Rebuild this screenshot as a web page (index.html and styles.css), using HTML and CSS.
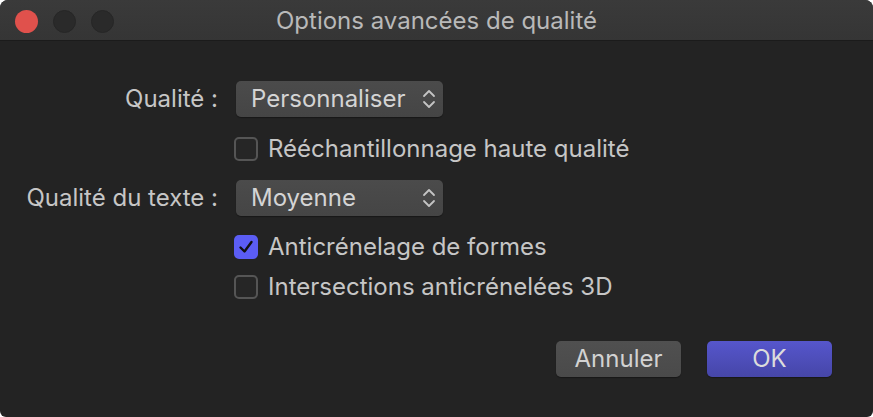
FILE: index.html
```html
<!DOCTYPE html>
<html lang="fr">
<head>
<meta charset="utf-8">
<title>Options avancées de qualité</title>
<link rel="stylesheet" href="styles.css">
</head>
<body>
<div class="window">
  <div class="titlebar">
    <div class="lights">
      <span class="light red"></span>
      <span class="light off"></span>
      <span class="light off"></span>
    </div>
    <div class="title">Options avancées de qualité</div>
  </div>
  <div class="content">
    <div class="form">
      <div class="label">Qualité :</div>
      <div class="popup"><span>Personnaliser</span>
        <svg class="chev" width="14" height="22" viewBox="0 0 14 22"><path d="M2 8 L7 3 L12 8 M2 14 L7 19 L12 14" fill="none" stroke="#c4c4c4" stroke-width="1.8" stroke-linecap="round" stroke-linejoin="round"/></svg>
      </div>
      <div class="empty"></div>
      <label class="check r1"><span class="box"></span><span>Rééchantillonnage haute qualité</span></label>
      <div class="label">Qualité du texte :</div>
      <div class="popup p2"><span>Moyenne</span>
        <svg class="chev" width="14" height="22" viewBox="0 0 14 22"><path d="M2 8 L7 3 L12 8 M2 14 L7 19 L12 14" fill="none" stroke="#c4c4c4" stroke-width="1.8" stroke-linecap="round" stroke-linejoin="round"/></svg>
      </div>
      <div class="empty"></div>
      <label class="check r2"><span class="box on"><svg width="24" height="24" viewBox="0 0 24 24"><path d="M6.5 12.5 L10.5 16.5 L17.5 7" fill="none" stroke="#111" stroke-width="2.4" stroke-linecap="round" stroke-linejoin="round"/></svg></span><span>Anticrénelage de formes</span></label>
      <div class="empty"></div>
      <label class="check r3"><span class="box"></span><span>Intersections anticrénelées 3D</span></label>
    </div>
    <div class="buttons">
      <button class="btn cancel">Annuler</button>
      <button class="btn ok">OK</button>
    </div>
  </div>
</div>
</body>
</html>
```
FILE: styles.css
```css
html, body {
  margin: 0;
  padding: 0;
  background: #ffffff;
}
body {
  width: 873px;
  height: 417px;
  overflow: hidden;
  font-family: Inter, "Liberation Sans", sans-serif;
}
.window {
  width: 873px;
  height: 417px;
  border-radius: 8px 8px 6px 6px;
  overflow: hidden;
  background: #232323;
  display: flex;
  flex-direction: column;
}
.titlebar {
  height: 41px;
  flex: none;
  background: linear-gradient(#3a3a3a, #353535);
  border-bottom: 1px solid #1b1b1b;
  box-sizing: border-box;
  position: relative;
  display: flex;
  align-items: center;
  justify-content: center;
}
.lights {
  position: absolute;
  left: 15px;
  top: 10px;
  display: flex;
  gap: 15px;
}
.light {
  width: 23px;
  height: 23px;
  border-radius: 50%;
  display: block;
}
.light.red { background: #e0514c; }
.light.off { background: #2a2a2a; border: 1px solid #262626; box-sizing: border-box; }
.title {
  color: #b9b9b9;
  font-size: 24px;
  line-height: 24px;
  margin-top: 2px;
}
.content {
  flex: 1;
  display: flex;
  flex-direction: column;
  padding-top: 40px;
}
.form {
  display: grid;
  grid-template-columns: 218px 1fr;
  column-gap: 16px;
  align-items: center;
}
.label {
  text-align: right;
  color: #c6c6c6;
  font-size: 24px;
  line-height: 24px;
}
.popup {
  width: 207px;
  height: 36px;
  box-sizing: border-box;
  margin-left: 2px;
  border-radius: 5px;
  background: linear-gradient(#4b4b4b, #454545);
  box-shadow: 0 1px 1px rgba(0,0,0,0.35);
  display: flex;
  align-items: center;
  justify-content: space-between;
  padding: 0 7px 0 15px;
  color: #d4d4d4;
  font-size: 24px;
  line-height: 24px;
}
.chev { display: block; }
.check {
  display: flex;
  align-items: center;
  gap: 10px;
  color: #c6c6c6;
  font-size: 24px;
  line-height: 24px;
}
.check.r1 { margin-top: 20px; margin-bottom: 19px; }
.check.r2 { margin-top: 19px; }
.check.r3 { margin-top: 16px; }
.box {
  width: 24px;
  height: 24px;
  box-sizing: border-box;
  border: 2px solid #555555;
  border-radius: 5px;
  background: #262626;
  flex: none;
  display: block;
}
.box.on {
  background: #5b5df4;
  border: none;
}
.box svg { display: block; }
.buttons {
  display: flex;
  justify-content: flex-end;
  gap: 26px;
  padding-right: 41px;
  margin-top: 42px;
}
.btn {
  width: 125px;
  height: 36px;
  border-radius: 5px;
  border: none;
  font-family: inherit;
  font-size: 24px;
  line-height: 24px;
  color: #d2d2d2;
  padding: 0;
  box-shadow: 0 1px 1px rgba(0,0,0,0.35);
}
.btn.cancel { background: linear-gradient(#505050, #4a4a4a); }
.btn.ok { background: linear-gradient(#5656cc, #4646a8); color: #dcdcdc; }
```
